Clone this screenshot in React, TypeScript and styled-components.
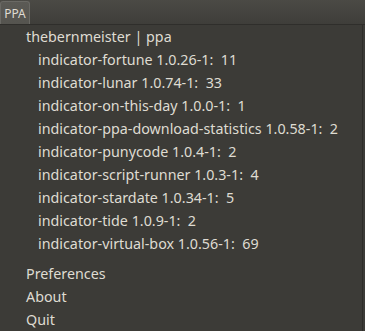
import React from "react";
import styled, { createGlobalStyle } from "styled-components";

const Global = createGlobalStyle`
  html, body { margin: 0; padding: 0; background: #3c3b37; }
  body { width: 365px; height: 331px; overflow: hidden; font-family: "Noto Sans", "DejaVu Sans", sans-serif; }
`;

const Screen = styled.div`
  width: 365px;
  height: 331px;
  display: flex;
  flex-direction: column;
  background: #3c3b37;
`;

const TopBar = styled.div`
  height: 24px;
  flex: none;
  display: flex;
  align-items: flex-end;
  background: linear-gradient(#4b4a45, #3f3e3a);
  border-bottom: 1px solid #2f2e2b;
`;

const Tab = styled.div`
  width: 30px;
  height: 23px;
  box-sizing: border-box;
  display: flex;
  align-items: center;
  justify-content: center;
  background: linear-gradient(#5b5a55, #55544f);
  border: 1px solid #6a6964;
  border-bottom: none;
  border-radius: 3px 3px 0 0;
  color: #dfdbd2;
  font-size: 12px;
`;

const Menu = styled.div`
  flex: 1;
  width: 363px;
  box-sizing: border-box;
  border-right: 1px solid #2e2d2a;
  display: flex;
  flex-direction: column;
`;

const Item = styled.div<{ $indent?: boolean }>`
  height: 23px;
  line-height: 23px;
  padding-left: ${(p) => (p.$indent ? 38 : 26)}px;
  color: #dfdbd2;
  font-size: 14.3px;
  white-space: pre;
`;

const Separator = styled.div`
  height: 7px;
`;

const packages = [
  "indicator-fortune 1.0.26-1:  11",
  "indicator-lunar 1.0.74-1:  33",
  "indicator-on-this-day 1.0.0-1:  1",
  "indicator-ppa-download-statistics 1.0.58-1:  2",
  "indicator-punycode 1.0.4-1:  2",
  "indicator-script-runner 1.0.3-1:  4",
  "indicator-stardate 1.0.34-1:  5",
  "indicator-tide 1.0.9-1:  2",
  "indicator-virtual-box 1.0.56-1:  69",
];

export default function App() {
  return (
    <Screen>
      <Global />
      <TopBar>
        <Tab>PPA</Tab>
      </TopBar>
      <Menu>
        <Item>thebernmeister | ppa</Item>
        {packages.map((p) => (
          <Item key={p} $indent>
            {p}
          </Item>
        ))}
        <Separator />
        <Item>Preferences</Item>
        <Item>About</Item>
        <Item>Quit</Item>
      </Menu>
    </Screen>
  );
}
